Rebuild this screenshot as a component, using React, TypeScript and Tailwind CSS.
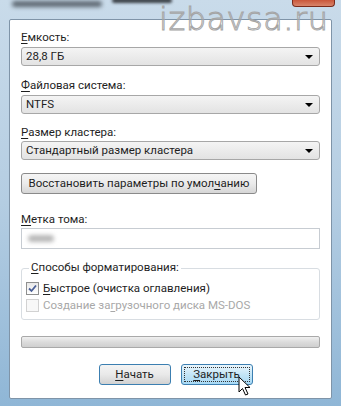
import React from 'react'

function Combo({ value }: { value: string }) {
  return (
    <div className="flex h-[19px] items-center justify-between rounded-[3px] border border-[#a7a7a7] bg-gradient-to-b from-[#f4f4f4] to-[#e3e3e3] pl-[4px] pr-[6px] text-[11.5px] text-[#1e1e1e]">
      <span>{value}</span>
      <span className="h-0 w-0 border-x-[4px] border-t-[4px] border-x-transparent border-t-black" />
    </div>
  )
}

function Label({ first, rest }: { first: string; rest: string }) {
  return (
    <div className="text-[11.5px] leading-[14px] text-[#1e1e1e]">
      <span className="underline underline-offset-2">{first}</span>
      {rest}
    </div>
  )
}

export default function App() {
  return (
    <div className="relative h-[406px] w-[341px] overflow-hidden bg-gradient-to-b from-[#c9dbea] via-[#b4cde2] to-[#8fb6d6] font-['Roboto',sans-serif]">
      {/* title bar */}
      <div className="flex h-[19px] items-start">
        <div className="ml-[12px] mt-[1px] h-[6px] w-[90px] rounded bg-[#5c6670] blur-[2px]" />
        <div className="ml-[10px] mt-[-2px] h-[5px] w-[60px] rounded bg-[#3c4248] blur-[1.5px]" />
        <div className="ml-auto mr-[6px] h-[7px] w-[43px] rounded-b-[4px] border border-t-0 border-[#7a2a1a] bg-gradient-to-b from-[#c9563a] to-[#d8846a]" />
      </div>

      {/* dialog body */}
      <div className="mx-[9px] flex h-[380px] flex-col rounded-[2px] border border-[#7f94a8] bg-white px-[11px] pt-[10px]">
        <Label first="Е" rest="мкость:" />
        <div className="mt-[3px]">
          <Combo value="28,8 ГБ" />
        </div>

        <div className="mt-[12px]">
          <Label first="Ф" rest="айловая система:" />
        </div>
        <div className="mt-[3px]">
          <Combo value="NTFS" />
        </div>

        <div className="mt-[11px]">
          <Label first="Р" rest="азмер кластера:" />
        </div>
        <div className="mt-[2px]">
          <Combo value="Стандартный размер кластера" />
        </div>

        <button className="mt-[13px] flex h-[21px] w-[236px] items-center justify-center rounded-[3px] border border-[#8a8a8a] bg-gradient-to-b from-[#f5f5f5] via-[#ebebeb] to-[#d6d6d6] text-[11.5px] text-[#1e1e1e]">
          <span>
            Восстановить параметры по умол<span className="underline underline-offset-2">ч</span>анию
          </span>
        </button>

        <div className="mt-[18px]">
          <Label first="М" rest="етка тома:" />
        </div>
        <div className="mt-[2px] flex h-[21px] items-center border border-[#c7ccd2] bg-white pl-[6px]">
          <div className="h-[7px] w-[26px] rounded bg-[#b7b7b7] blur-[2px]" />
        </div>

        {/* group box */}
        <div className="relative mt-[19px] h-[52px] rounded-[3px] border border-[#d8dde2] pl-[4px] pt-[12px]">
          <div className="absolute left-[7px] top-[-9px] bg-white px-[2px]">
            <Label first="С" rest="пособы форматирования:" />
          </div>
          <div className="flex items-center gap-[4px] text-[11.5px] leading-[15px] text-[#1e1e1e]">
            <span className="flex h-[13px] w-[13px] items-center justify-center border border-[#8e8f8f] bg-gradient-to-b from-[#e8e8e8] to-[#ffffff]">
              <svg width="9" height="9" viewBox="0 0 9 9">
                <path d="M1 4.5 L3.5 7 L8 1.5" fill="none" stroke="#4a5f97" strokeWidth="1.8" />
              </svg>
            </span>
            <span>
              <span className="underline underline-offset-2">Б</span>ыстрое (очистка оглавления)
            </span>
          </div>
          <div className="mt-[2px] flex items-center gap-[4px] text-[11.5px] leading-[15px] text-[#a8a8a8]">
            <span className="h-[13px] w-[13px] border border-[#d2d2d2] bg-[#f8f8f8]" />
            <span>
              Создание за<span className="underline underline-offset-2">г</span>рузочного диска MS-DOS
            </span>
          </div>
        </div>

        {/* progress */}
        <div className="mt-[16px] h-[12px] rounded-[2px] border border-[#a9a9a9] bg-gradient-to-b from-[#f0f0f0] via-[#dcdcdc] to-[#cfcfcf]" />

        {/* buttons */}
        <div className="mt-[16px] flex justify-center gap-[10px] pl-[10px]">
          <button className="flex h-[21px] w-[72px] items-center justify-center rounded-[3px] border border-[#3c7fb1] bg-gradient-to-b from-[#f4f4f4] via-[#e9e9e9] to-[#d2d2d2] text-[11.5px] text-[#1e1e1e]">
            <span>
              <span className="underline underline-offset-2">Н</span>ачать
            </span>
          </button>
          <button className="flex h-[21px] w-[72px] items-center justify-center rounded-[3px] border border-[#3c7fb1] bg-gradient-to-b from-[#eaf6fd] via-[#c4e5f6] to-[#a7d9f5] p-[2px] text-[11.5px] text-[#1e1e1e]">
            <span className="flex h-full w-full items-center justify-center border border-dotted border-[#333]">
              <span>
                <span className="underline underline-offset-2">З</span>акрыть
              </span>
            </span>
          </button>
        </div>
      </div>

      {/* watermark */}
      <div className="pointer-events-none absolute left-[159px] top-[1px] whitespace-nowrap text-[32px] font-light leading-[36px] tracking-[0.5px] text-transparent [-webkit-text-stroke:1px_#a5a5a5] font-['DejaVu_Sans',sans-serif]">
        izbavsa.ru
      </div>

      {/* mouse cursor */}
      <svg className="absolute left-[238px] top-[376px]" width="14" height="21" viewBox="0 0 14 21">
        <path d="M1 1 L1 16 L4.5 12.5 L7.5 19 L10 18 L7 11.5 L12 11.5 Z" fill="white" stroke="black" strokeWidth="1" />
      </svg>
    </div>
  )
}
